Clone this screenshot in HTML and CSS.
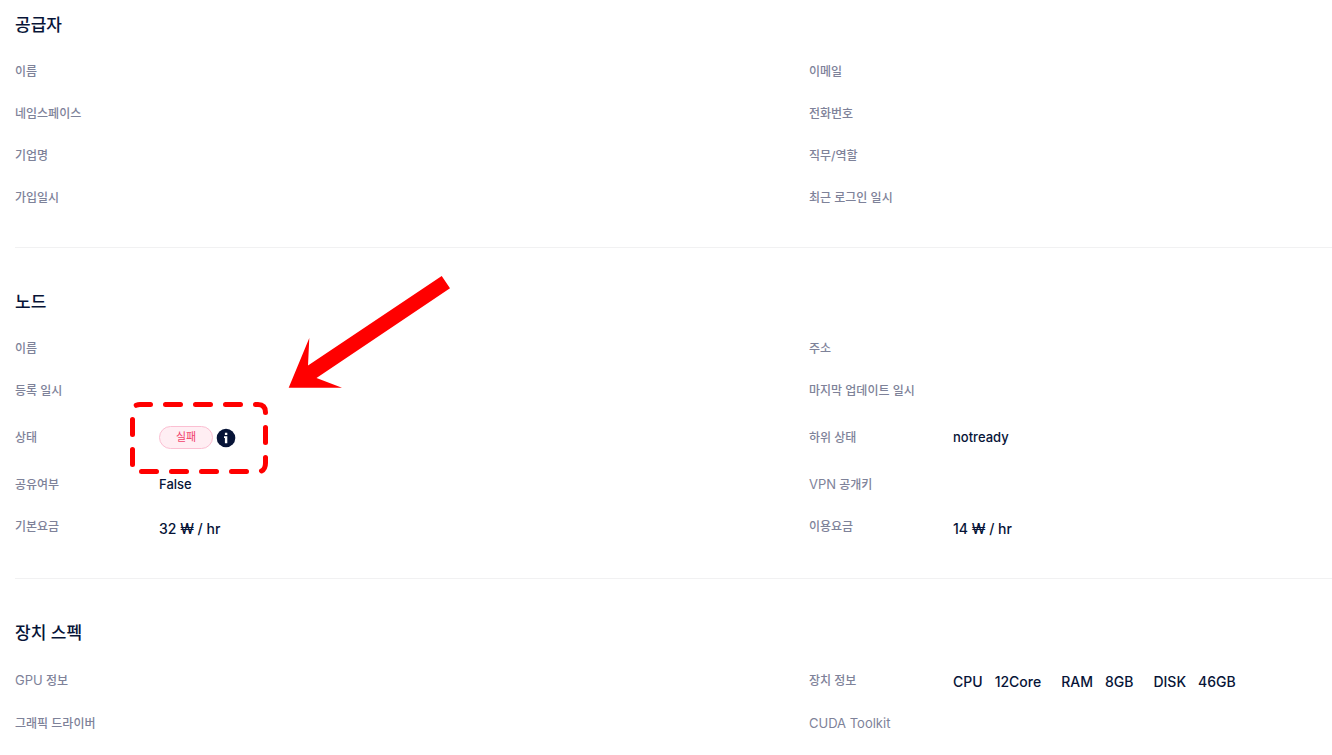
FILE: index.html
```html
<!DOCTYPE html>
<html lang="ko">
<head>
<meta charset="utf-8">
<meta name="viewport" content="width=device-width, initial-scale=1">
<title>노드 상세</title>
<link rel="stylesheet" href="styles.css">
</head>
<body>
<main class="page">
  <section class="section">
    <h2 class="title">공급자</h2>
    <dl class="fields">
      <div class="field"><dt class="label">이름</dt><dd class="value"></dd></div>
      <div class="field"><dt class="label">이메일</dt><dd class="value"></dd></div>
      <div class="field"><dt class="label">네임스페이스</dt><dd class="value"></dd></div>
      <div class="field"><dt class="label">전화번호</dt><dd class="value"></dd></div>
      <div class="field"><dt class="label">기업명</dt><dd class="value"></dd></div>
      <div class="field"><dt class="label">직무/역할</dt><dd class="value"></dd></div>
      <div class="field"><dt class="label">가입일시</dt><dd class="value"></dd></div>
      <div class="field"><dt class="label">최근 로그인 일시</dt><dd class="value"></dd></div>
    </dl>
  </section>

  <section class="section">
    <h2 class="title">노드</h2>
    <dl class="fields">
      <div class="field"><dt class="label">이름</dt><dd class="value"></dd></div>
      <div class="field"><dt class="label">주소</dt><dd class="value"></dd></div>
      <div class="field"><dt class="label">등록 일시</dt><dd class="value"></dd></div>
      <div class="field"><dt class="label">마지막 업데이트 일시</dt><dd class="value"></dd></div>
      <div class="field field-status">
        <dt class="label">상태</dt>
        <dd class="value status">
          <span class="badge">실패</span>
          <button class="info" type="button" aria-label="상태 정보">
            <svg class="info-icon" viewBox="0 0 20 20" aria-hidden="true">
              <circle cx="10" cy="10" r="9.3" fill="#071437"/>
              <path d="M8.900 4.800h2.400v2.200H8.900zM8 8.300h3.300v6.900H8.900V9.900H8z" fill="#fff"/>
            </svg>
          </button>
          <svg class="callout" viewBox="128 272 324 204" aria-hidden="true">
            <path fill="#f00" d="M288.700 387.700 309.300 338 308 365.500 441.700 276 450 288.300 316.500 378 342 387.700z"/>
            <path fill="none" stroke="#f00" stroke-width="5" stroke-linecap="round" d="M136.200 405.300Q138 404.500 140 404.500H150.500M165.500 404.500h15M195.500 404.500h15M225.500 404.500h15M255.500 404.500H258Q265.500 404.500 265.500 412.500M265.500 427.500v15M265.500 457.500V463Q265.500 469 261.500 471M246.500 471.500h-15M216.500 471.500h-15M186.500 471.500h-15M156.500 471.500h-15M132.500 464.500v-15M132.500 434.500v-15"/>
          </svg>
        </dd>
      </div>
      <div class="field field-status"><dt class="label">하위 상태</dt><dd class="value">notready</dd></div>
      <div class="field"><dt class="label">공유여부</dt><dd class="value">False</dd></div>
      <div class="field"><dt class="label"><span class="latin">VPN</span> 공개키</dt><dd class="value"></dd></div>
      <div class="field field-top"><dt class="label">기본요금</dt><dd class="value value-large">32 ₩ / hr</dd></div>
      <div class="field field-top"><dt class="label">이용요금</dt><dd class="value value-large">14 ₩ / hr</dd></div>
    </dl>
  </section>

  <section class="section">
    <h2 class="title">장치 스펙</h2>
    <dl class="fields">
      <div class="field"><dt class="label"><span class="latin">GPU</span> 정보</dt><dd class="value"></dd></div>
      <div class="field">
        <dt class="label">장치 정보</dt>
        <dd class="value value-large specs">
          <span class="spec"><span>CPU</span><span>12Core</span></span>
          <span class="spec"><span>RAM</span><span>8GB</span></span>
          <span class="spec"><span>DISK</span><span>46GB</span></span>
        </dd>
      </div>
      <div class="field"><dt class="label">그래픽 드라이버</dt><dd class="value"></dd></div>
      <div class="field"><dt class="label"><span class="latin">CUDA Toolkit</span></dt><dd class="value"></dd></div>
    </dl>
  </section>
</main>
</body>
</html>
```
FILE: styles.css
```css
* { box-sizing: border-box; }

body {
  margin: 0;
  background: #fff;
  color: #071437;
  font-family: Inter, "Noto Sans CJK KR", sans-serif;
}

.page { padding: 13px 0 0 15px; }

.section {
  padding-bottom: 38px;
  border-bottom: 1px solid #f1f1f2;
}
.section + .section { padding-top: 42px; }
.section:last-child { padding-bottom: 20px; border-bottom: 0; }

.title {
  margin: 0 0 24px;
  font-size: 17px;
  font-weight: 500;
  line-height: 24px;
}

.fields {
  display: grid;
  grid-template-columns: 794fr 523fr;
  row-gap: 20px;
  margin: 0;
}

.field {
  display: grid;
  grid-template-columns: 144px 1fr;
  align-items: center;
}
.field-status { min-height: 32px; }
.field-top { align-items: start; }

.label {
  color: #7e8299;
  font-size: 12px;
  font-weight: 500;
  line-height: 22px;
}
.latin {
  font-size: 13px;
  font-weight: 400;
  line-height: 1;
}

.value {
  margin: 0;
  padding-bottom: 2px;
  font-size: 13px;
  font-weight: 500;
  line-height: 20px;
}
.value-large {
  padding: 2px 0 0;
  font-size: 14px;
  line-height: 22px;
}

.status {
  position: relative;
  display: flex;
  align-items: center;
  gap: 3px;
  height: 32px;
}

.badge {
  padding: 0 16px;
  border: 1px solid #fbbfd2;
  border-radius: 12px;
  background: #ffeef3;
  color: #f1416c;
  font-size: 11px;
  font-weight: 400;
  line-height: 21px;
}

.info {
  display: flex;
  padding: 2px 0 0;
  border: 0;
  background: none;
  cursor: pointer;
}
.info-icon {
  width: 20px;
  height: 20px;
}

.callout {
  position: absolute;
  top: -150px;
  left: -31px;
  width: 324px;
  height: 204px;
  pointer-events: none;
}

.specs {
  display: flex;
  flex-wrap: wrap;
  column-gap: 20px;
}
.spec {
  display: flex;
  gap: 12px;
}
```
